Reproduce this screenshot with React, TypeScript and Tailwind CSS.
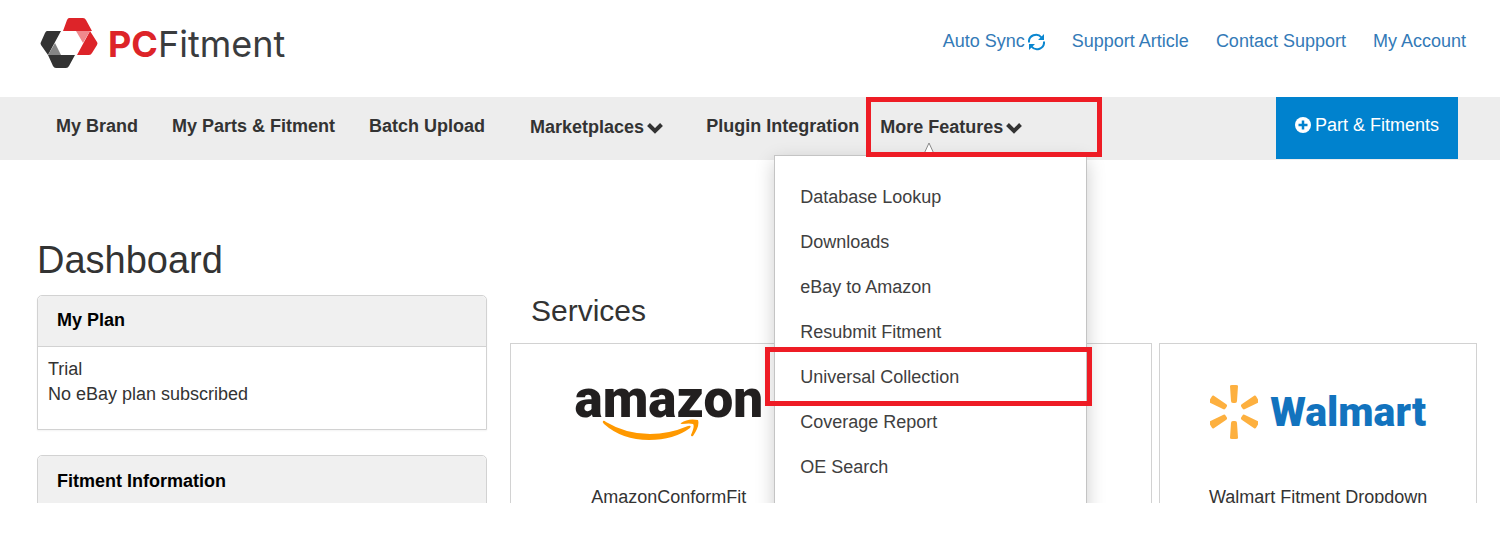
import type { ReactNode } from 'react';

const topLinks = ['Support Article', 'Contact Support', 'My Account'];

const featureLinks = [
  'Database Lookup',
  'Downloads',
  'eBay to Amazon',
  'Resubmit Fitment',
  'Universal Collection',
  'Coverage Report',
  'OE Search',
];

function Logo() {
  return (
    <a href="#" className="flex items-center gap-[10px]">
      <svg viewBox="0 0 58 51" className="h-[51px] w-[58px] shrink-0">
        <path d="M29 0h14q2 0 3 2l6 11H23l4-11q1-2 2-2z" fill="#dd2429" />
        <path d="M50 13l7 11q1 1 0 3l-5 8q-1 2-3 2H37z" fill="#dd2429" />
        <path d="M36 13h14l-7 12z" fill="#f0898c" />
        <path d="M7 13h14L8 37 1 27q-1-2 0-3l4-9q1-2 2-2z" fill="#333" />
        <path d="M8 37h27l-6 11q-1 2-3 2H16q-2 0-3-2z" fill="#333" />
        <path d="M15 25l6 12H8z" fill="#858585" />
      </svg>
      <span className="font-[Inter,sans-serif] text-[36px] leading-[44px] text-[#3a3c3e]">
        <b className="font-bold text-[#dd2429]">PC</b>Fitment
      </span>
    </a>
  );
}

function SyncIcon() {
  return (
    <svg viewBox="0 0 17 18" className="h-[18px] w-[17px]" fill="none" stroke="#0a86d0" strokeWidth="2">
      <path d="M1 9.5A7 7 0 0 1 13.5 4.5" />
      <path d="M16 8.5A7 7 0 0 1 3.5 13.5" />
      <path d="M16 1v6h-6zM1 17v-6h6z" fill="#0a86d0" stroke="none" />
    </svg>
  );
}

function ChevronIcon() {
  return (
    <svg viewBox="0 0 16 12" className="h-3 w-4" fill="none" stroke="currentColor" strokeWidth="4">
      <path d="M1.5 2.5L8 9l6.5-6.5" />
    </svg>
  );
}

function PlusCircleIcon() {
  return (
    <svg viewBox="0 0 16 16" className="mt-1 h-4 w-4">
      <circle cx="8" cy="8" r="8" fill="#fff" />
      <path d="M8 3.5v9M3.5 8h9" stroke="#0082ce" strokeWidth="2.5" />
    </svg>
  );
}

function AmazonLogo() {
  return (
    <div className="flex flex-col items-center">
      <span className="font-[Roboto,sans-serif] text-[53px] leading-7 font-black text-[#221f1f]">
        amazon
      </span>
      <svg viewBox="0 0 98 22" className="mt-[6px] mr-[36px] h-[22px] w-[98px]" fill="#ff9900">
        <path d="M1 2Q0 3 2 5Q20 21 47 21Q72 21 88 9Q90 6 86 7Q67 15 48 15Q24 15 4 3Q2 1 1 2z" />
        <path d="M79 4Q86-1 96 1Q98 7 91 17Q89 18 89 16Q93 7 91 5Q88 4 80 5Q78 5 79 4z" />
      </svg>
    </div>
  );
}

function WalmartLogo() {
  return (
    <div className="flex items-center gap-3">
      <svg viewBox="0 0 48 54" className="h-[54px] w-12" fill="#fdb03f">
        <path id="ray" d="M20 1q0-1 2-1h4q2 0 2 1l-1 15q0 2-2 2h-2q-2 0-2-2z" />
        <use href="#ray" transform="rotate(60 24 27)" />
        <use href="#ray" transform="rotate(120 24 27)" />
        <use href="#ray" transform="rotate(180 24 27)" />
        <use href="#ray" transform="rotate(240 24 27)" />
        <use href="#ray" transform="rotate(300 24 27)" />
      </svg>
      <span className="font-[Roboto,sans-serif] text-[41px] leading-[54px] font-black text-[#1273be]">
        Walmart
      </span>
    </div>
  );
}

function MoreFeatures() {
  return (
    <div className="relative ml-[21px] font-normal">
      <button className="flex items-center gap-[3px] pt-px font-bold">
        More Features <ChevronIcon />
      </button>

      {/* open menu */}
      <svg viewBox="0 0 12 14" className="absolute top-[28px] left-[43px] z-20 h-[14px] w-3">
        <path d="M0 14L6 1l6 13" fill="#fff" stroke="#888" />
      </svg>
      <ul className="absolute top-[41px] -left-[106px] z-10 w-[313px] border border-[#c4c4c4] bg-white pt-[19px] pb-8 text-[#404040] shadow-[0_6px_18px_rgba(0,0,0,0.2)]">
        {featureLinks.map((label) => (
          <li key={label} className="relative">
            <a href="#" className="block px-[25px] leading-[45px]">
              {label}
            </a>
            {label === 'Universal Collection' && (
              <div className="absolute -top-2 -right-[6px] -bottom-[6px] -left-[10px] border-5 border-[#ee1c25]" />
            )}
          </li>
        ))}
      </ul>
      <div className="absolute -top-[17px] -left-[14px] z-30 h-[60px] w-[236px] border-5 border-[#ee1c25]" />
    </div>
  );
}

function ServiceCard({ name, children }: { name?: string; children?: ReactNode }) {
  return (
    <div className="flex h-[200px] flex-col items-center border border-[#d2d2d2] pt-[41px]">
      <div className="h-[100px]">{children}</div>
      <p>{name}</p>
    </div>
  );
}

export default function App() {
  return (
    <div className="h-[calc(100vh-36px)] overflow-hidden bg-white font-['Liberation_Sans',Arial,sans-serif] text-[18px] leading-[25px] text-[#333]">
      <header className="flex h-[97px] items-start justify-between pt-[18px] pr-[34px] pl-10">
        <Logo />
        <div className="flex gap-[27px] pt-[11px] text-[#337ab7]">
          <a href="#" className="flex items-center gap-[3px]">
            Auto Sync <SyncIcon />
          </a>
          {topLinks.map((label) => (
            <a key={label} href="#">{label}</a>
          ))}
        </div>
      </header>

      <nav className="flex h-[63px] items-start bg-[#ededed] pr-[42px] pl-14 font-bold">
        <div className="flex pt-[17px] whitespace-nowrap">
          <a href="#">My Brand</a>
          <a href="#" className="ml-[34px]">My Parts &amp; Fitment</a>
          <a href="#" className="ml-[34px]">Batch Upload</a>
          <button className="ml-[45px] flex items-center gap-[3px] pt-px">
            Marketplaces <ChevronIcon />
          </button>
          <a href="#" className="ml-[43px]">Plugin Integration</a>
          <MoreFeatures />
        </div>
        <button className="ml-auto flex h-[62px] items-start gap-1 bg-[#0082ce] px-[19px] pt-4 font-normal whitespace-nowrap text-white">
          <PlusCircleIcon /> Part &amp; Fitments
        </button>
      </nav>

      <main className="flex gap-[23px] pr-[23px] pl-[37px]">
        <section className="w-[450px] shrink-0 pt-20">
          <h1 className="text-[38px] leading-10">Dashboard</h1>
          <div className="mt-[15px] rounded-t-[5px] border border-[#d2d2d2] shadow-xs">
            <h2 className="rounded-t-[5px] border-b border-[#d2d2d2] bg-[#f0f0f0] px-[19px] pt-3 pb-[13px] font-bold text-black">My Plan</h2>
            <div className="px-[10px] pt-[10px] pb-[22px]">
              <p>Trial</p>
              <p>No eBay plan subscribed</p>
            </div>
          </div>
          <div className="mt-[25px] rounded-t-[5px] border border-[#d2d2d2]">
            <h2 className="rounded-t-[5px] bg-[#f0f0f0] px-[19px] py-[13px] font-bold text-black">Fitment Information</h2>
          </div>
        </section>

        <section className="min-w-0 flex-1 pt-[133px]">
          <h2 className="px-[21px] text-[30px] leading-9">Services</h2>
          <div className="mt-[14px] grid grid-cols-3 gap-[7px]">
            <ServiceCard name="AmazonConformFit"><AmazonLogo /></ServiceCard>
            <ServiceCard />
            <ServiceCard name="Walmart Fitment Dropdown"><WalmartLogo /></ServiceCard>
          </div>
        </section>
      </main>
    </div>
  );
}
